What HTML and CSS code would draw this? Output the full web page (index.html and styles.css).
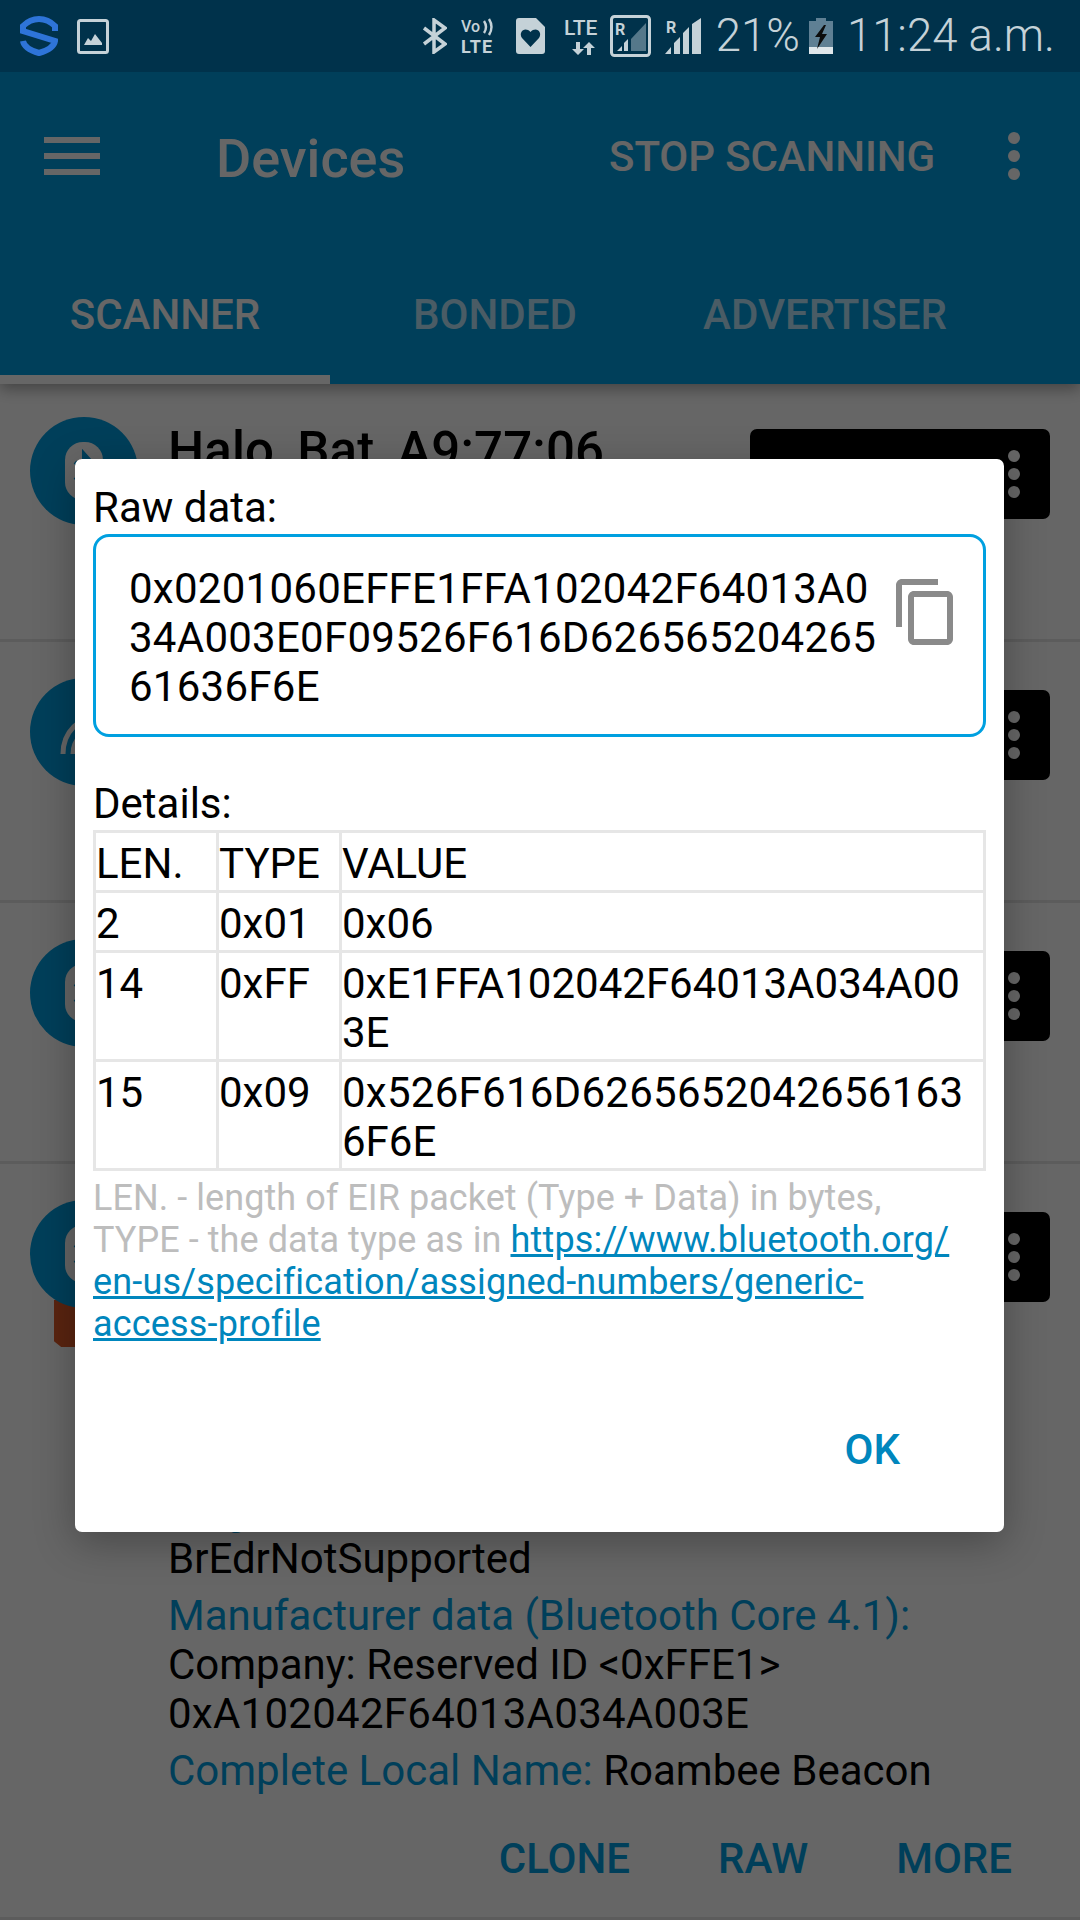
FILE: index.html
```html
<!DOCTYPE html>
<html lang="en">
<head>
<meta charset="utf-8">
<title>Devices</title>
<link rel="stylesheet" href="styles.css">
</head>
<body>
<div class="screen">
  <header class="status">
    <svg class="si si-s" viewBox="0 0 38 40"><path d="M35 15V10C30 5 24 3 19 3S8 5 3 10V15L35 25C34 31 26 35 19 37C12 35 4 31 3 25" fill="none" stroke="#2e74d8" stroke-width="6"/></svg>
    <svg class="si si-img" viewBox="0 0 32 35"><rect x="1.5" y="1.5" width="29" height="32" rx="2" fill="none" stroke="#c5d2d8" stroke-width="3"/><path d="M7 26L11 19L14 22L18 15L25 24V26Z" fill="#c5d2d8"/></svg>
    <div class="status-right">
      <svg class="si si-bt" viewBox="0 0 25 36"><path d="M2 10L23 26L12 34V2L23 10L2 26" fill="none" stroke="#c5d2d8" stroke-width="3.5"/></svg>
      <svg class="si si-volte" viewBox="0 -2 35 40"><text x="0" y="14" class="ic-t ic-vo">Vo</text><path d="M23 3Q27 9 23 15M28 1Q33 9 28 17" fill="none" stroke="#c5d2d8" stroke-width="2.4"/><text x="0" y="35" class="ic-t ic-lte">LTE</text></svg>
      <svg class="si si-sim" viewBox="0 0 29 36"><path d="M3 0H20L29 9V33A3 3 0 0 1 26 36H3A3 3 0 0 1 0 33V3A3 3 0 0 1 3 0Z" fill="#c5d2d8"/><path d="M14.5 29L6 20C2 14 9 8 14.5 14C20 8 27 14 23 20Z" fill="#00324b"/></svg>
      <svg class="si si-lte" viewBox="0 -2 38 40"><text x="0" y="17" class="ic-t ic-lte2">LTE</text><path d="M12 24H16V31H20L14 37L8 31H12Z" fill="#c5d2d8"/><path d="M23 37H27V30H31L25 24L19 30H23Z" fill="#c5d2d8"/></svg>
      <svg class="si si-rbox" viewBox="0 0 41 42"><rect x="1.5" y="1.5" width="38" height="39" rx="3" fill="none" stroke="#c5d2d8" stroke-width="3"/><text x="5" y="20" class="ic-t ic-r">R</text><path d="M21 36V24L36 8V36Z" fill="#55788a"/><path d="M7 36L12 31V36ZM14 36V28L18 24V36Z" fill="#c5d2d8"/></svg>
      <svg class="si si-sig" viewBox="0 0 36 36"><text x="1" y="15" class="ic-t ic-r">R</text><path d="M0 36L6 29V36ZM9 36V25L15 19V36ZM18 36V15L24 9V36ZM27 36V6L36 0V36Z" fill="#c5d2d8"/></svg>
      <span class="st-text st-pct">21%</span>
      <svg class="si si-bat" viewBox="0 0 24 36"><path d="M7 0H17V3H24V29H0V3H7Z" fill="#5f8094"/><rect y="29" width="24" height="7" fill="#dfe7eb"/><path d="M15 7L6 19H11L8 31L18 16H13L17 7Z" fill="#0c0c0c"/></svg>
      <span class="st-text st-time">11:24 a.m.</span>
    </div>
  </header>

  <div class="appbar">
    <div class="toolbar">
      <div class="burger"><i></i><i></i><i></i></div>
      <div class="app-title">Devices</div>
      <div class="action">STOP SCANNING</div>
      <div class="dots"><i></i><i></i><i></i></div>
    </div>
    <div class="tabs">
      <div class="tab active">SCANNER</div>
      <div class="tab">BONDED</div>
      <div class="tab">ADVERTISER</div>
    </div>
  </div>

  <main class="list">
    <section class="row">
      <div class="head">
        <div class="avatar">
          <svg class="beacon" viewBox="0 0 38 58"><rect width="38" height="58" rx="18" fill="#fff"/><path d="M10 20L28 36L19 46V12L28 22L10 38" fill="none" stroke="#009ee1" stroke-width="4"/></svg>
        </div>
        <div class="title">Halo_Bat_A9:77:06</div>
        <div class="connect"><div class="dots"><i></i><i></i><i></i></div></div>
      </div>
    </section>
    <section class="row">
      <div class="head">
        <div class="avatar">
          <svg class="arc" viewBox="0 0 60 60"><path d="M9 52C9 30 25 14 47 14M19 52C19 38 30 26 45 26" fill="none" stroke="#fff" stroke-width="5"/></svg>
        </div>
        <div class="title"></div>
        <div class="connect"><div class="dots"><i></i><i></i><i></i></div></div>
      </div>
    </section>
    <section class="row">
      <div class="head">
        <div class="avatar">
          <svg class="beacon" viewBox="0 0 38 58"><rect width="38" height="58" rx="18" fill="#fff"/><path d="M10 20L28 36L19 46V12L28 22L10 38" fill="none" stroke="#009ee1" stroke-width="4"/></svg>
        </div>
        <div class="title"></div>
        <div class="connect"><div class="dots"><i></i><i></i><i></i></div></div>
      </div>
    </section>
    <section class="row row-open">
      <div class="head">
        <div class="avatar-col">
          <div class="avatar">
            <svg class="beacon" viewBox="0 0 38 58"><rect width="38" height="58" rx="18" fill="#fff"/><path d="M10 20L28 36L19 46V12L28 22L10 38" fill="none" stroke="#009ee1" stroke-width="4"/></svg>
          </div>
          <div class="tag"></div>
        </div>
        <div class="title"></div>
        <div class="connect"><div class="dots"><i></i><i></i><i></i></div></div>
      </div>
      <div class="details">
        <p><span class="key">Flags:</span><br>BrEdrNotSupported</p>
        <p><span class="key">Manufacturer data (Bluetooth Core 4.1):</span><br>Company: Reserved ID &lt;0xFFE1&gt;<br><span class="hex">0xA102042F64013A034A003E</span></p>
        <p><span class="key">Complete Local Name:</span> Roambee Beacon</p>
      </div>
      <div class="row-actions">
        <span>CLONE</span><span>RAW</span><span>MORE</span>
      </div>
    </section>
  </main>

  <div class="scrim"></div>

  <div class="dialog">
    <div class="label">Raw data:</div>
    <div class="raw">
      <div class="hex">0x0201060EFFE1FFA102042F64013A0<br>34A003E0F09526F616D626565204265<br>61636F6E</div>
      <svg class="copy" viewBox="0 0 24 24"><path d="M16 1H4C2.9 1 2 1.9 2 3V17H4V3H16V1ZM19 5H8C6.9 5 6 5.9 6 7V21C6 22.1 6.9 23 8 23H19C20.1 23 21 22.1 21 21V7C21 5.9 20.1 5 19 5ZM19 21H8V7H19V21Z" fill="#8a8a8a"/></svg>
    </div>
    <div class="label label-details">Details:</div>
    <table class="eir">
      <tr><td class="c-len">LEN.</td><td class="c-type">TYPE</td><td>VALUE</td></tr>
      <tr><td>2</td><td>0x01</td><td>0x06</td></tr>
      <tr><td>14</td><td>0xFF</td><td>0xE1FFA102042F64013A034A00<br>3E</td></tr>
      <tr><td>15</td><td>0x09</td><td><span class="hex">0x526F616D6265652042656163</span><br>6F6E</td></tr>
    </table>
    <p class="note">LEN. - length of EIR packet (Type + Data) in bytes,<br>TYPE - the data type as in <a class="link" href="#">https://www.bluetooth.org/<br>en-us/specification/assigned-numbers/generic-<br>access-profile</a></p>
    <div class="dialog-actions"><span class="ok">OK</span></div>
  </div>
</div>
</body>
</html>
```

FILE: styles.css
```css
* { box-sizing: border-box; }
html, body { margin: 0; padding: 0; }
body { font-family: Roboto, "Liberation Sans", sans-serif; background: #fff; }
i { display: block; }
p { margin: 0; }

.screen { position: relative; width: 1080px; height: 1920px; overflow: hidden; background: #fff; color: #000; font-size: 42px; line-height: 49px; }

/* status bar */
.status { position: relative; z-index: 5; height: 72px; display: flex; align-items: center; padding-left: 20px; background: #00324b; }
.si { display: block; flex: none; }
.si-s { width: 38px; height: 40px; }
.si-img { width: 32px; height: 35px; margin-left: 19px; }
.status-right { margin-left: auto; display: flex; align-items: center; padding-right: 25px; }
.si-bt { width: 25px; height: 36px; }
.si-volte { width: 35px; height: 40px; margin-left: 14px; }
.si-sim { width: 29px; height: 36px; margin-left: 20px; }
.si-lte { width: 38px; height: 40px; margin-left: 19px; }
.si-rbox { width: 41px; height: 42px; margin-left: 8px; }
.si-sig { width: 36px; height: 36px; margin-left: 14px; }
.si-bat { width: 24px; height: 36px; margin-left: 9px; }
.ic-t { fill: #c5d2d8; font-family: Roboto, sans-serif; font-weight: 500; }
.ic-vo { font-size: 16px; }
.ic-lte { font-size: 18px; font-weight: 700; letter-spacing: 1px; }
.ic-lte2 { font-size: 21px; }
.ic-r { font-size: 16px; font-weight: 700; }
.st-text { color: #c5d2d8; font-size: 45.5px; line-height: 54px; font-weight: 300; white-space: nowrap; }
.st-pct { margin-left: 15px; }
.st-time { margin-left: 14px; }

/* app bar (colours are undimmed; the scrim darkens them) */
.appbar { position: relative; z-index: 2; height: 312px; background: #009ee1; color: #fff; box-shadow: 0 5px 14px rgba(0,0,0,.35); }
.toolbar { height: 168px; display: flex; align-items: center; padding: 0 60px 0 44px; }
.burger { width: 56px; display: flex; flex-direction: column; gap: 10px; }
.burger i { height: 6px; background: #fff; }
.app-title { margin: 5px 0 0 116px; font-size: 54px; line-height: 60px; font-weight: 500; }
.action { margin-left: auto; margin-right: 73px; font-weight: 500; letter-spacing: -.1px; }
.dots { width: 12px; display: flex; flex-direction: column; gap: 6px; }
.dots i { width: 12px; height: 12px; border-radius: 50%; background: #fff; }
.tabs { display: grid; grid-template-columns: repeat(3, 330px); height: 144px; }
.tab { display: flex; align-items: center; justify-content: center; padding-top: 13px; font-weight: 500; color: #b9e6fc; border-bottom: 9px solid transparent; }
.tab.active { color: #fff; border-bottom-color: #fff; }

/* device list */
.list { margin-top: -3px; }
.row { height: 261px; padding-top: 36px; border-bottom: 3px solid #e6e6e6; }
.row-open { height: 756px; }
.head { display: flex; align-items: flex-start; padding: 0 30px; height: 285px; }
.avatar { position: relative; z-index: 1; flex: none; width: 108px; height: 108px; border-radius: 50%; background: #009ee1; display: flex; align-items: center; justify-content: center; }
.beacon { width: 38px; height: 58px; }
.arc { width: 60px; height: 60px; }
.avatar-col { flex: none; width: 108px; display: flex; flex-direction: column; align-items: center; }
.tag { width: 60px; height: 47px; margin-top: -8px; background: #e15a28; clip-path: polygon(0 0, 100% 0, 100% 100%, 12% 100%, 0 88%); }
.title { flex: 1; margin: 4px 20px 0 30px; font-size: 51px; line-height: 60px; font-weight: 500; letter-spacing: .15px; white-space: nowrap; }
.connect { flex: none; width: 300px; height: 90px; margin-top: 12px; border-radius: 7px; background: #000; display: flex; align-items: flex-start; justify-content: flex-end; padding: 21px 30px 0 0; }
.details { margin-left: 168px; }
.details p { margin-bottom: 8px; }
.key { color: #009ee1; }
.hex { letter-spacing: .26px; }
.row-actions { display: flex; justify-content: flex-end; gap: 88px; margin-top: 39px; padding-right: 68px; color: #009ee1; font-weight: 500; }

.scrim { position: absolute; inset: 72px 0 0 0; z-index: 3; background: rgba(0,0,0,.6); }

/* dialog */
.dialog { position: absolute; z-index: 4; left: 75px; top: 459px; width: 929px; height: 1073px; padding: 24px 18px 0; background: #fff; border-radius: 7px; box-shadow: 0 10px 40px rgba(0,0,0,.3); display: flex; flex-direction: column; }
.label { height: 51px; }
.label-details { margin-top: 42px; }
.raw { position: relative; height: 203px; padding: 27px 0 0 33px; border: 3px solid #00a0e0; border-radius: 16px; white-space: nowrap; }
.copy { position: absolute; right: 21px; top: 39px; width: 72px; height: 72px; }
.eir { width: 893px; table-layout: fixed; border-collapse: separate; border-spacing: 3px; background: #e6e6e6; }
.eir td { padding: 6px 0 2px; vertical-align: top; background: #fff; white-space: nowrap; }
.c-len, .c-type { width: 120px; }
.note { margin-top: 6px; font-size: 36px; line-height: 42px; color: #bdbdbd; letter-spacing: .06px; }
.link { color: #0086bd; text-decoration: underline; letter-spacing: .18px; }
.dialog-actions { margin-top: auto; padding: 0 86px 58px 0; display: flex; justify-content: flex-end; }
.ok { color: #0086bd; font-weight: 500; }
```
